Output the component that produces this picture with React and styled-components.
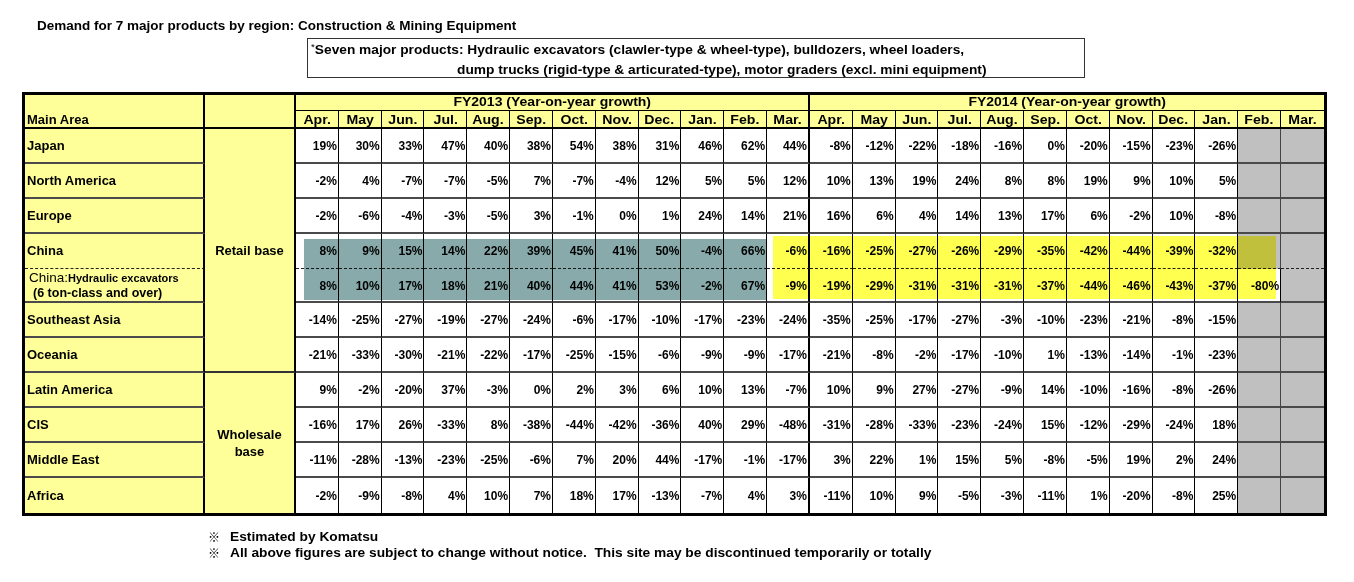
import React from 'react';
import styled, { createGlobalStyle } from 'styled-components';

const GlobalStyle = createGlobalStyle`
  body {
    margin: 0;
    background: #fff;
    font-family: "Liberation Sans", Arial, sans-serif;
    color: #000;
  }
`;

const YELLOW = '#ffff99';
const GRAY = '#c0c0c0';
const ROW_LINE = '2px solid #4a4a4a';

const Page = styled.div`
  padding-top: 19px;
  width: 1354px;
  height: 582px;
  box-sizing: border-box;
`;

const Wide = styled.span`
  display: inline-block;
  transform: scaleX(${p => p.$sx});
  transform-origin: ${p => p.$origin || 'left'} center;
`;

const Title = styled.div`
  margin-left: 37px;
  font-size: 12.5px;
  line-height: 15px;
  font-weight: bold;
  white-space: nowrap;
`;

const NoteBox = styled.div`
  margin: 4px 0 0 307px;
  width: 778px;
  height: 40px;
  box-sizing: border-box;
  border: 1px solid #333;
  padding: 0 0 0 3px;
  font-size: 12.5px;
  font-weight: bold;
  line-height: 20px;
`;

const NoteLine = styled.div`
  margin-top: ${p => p.$lift || 0}px;
  padding-left: ${p => p.$indent || 0}px;
  white-space: nowrap;
`;

const Star = styled.span`
  font-size: 9px;
  font-weight: normal;
  vertical-align: 4px;
`;

const Sheet = styled.div`
  position: relative;
  display: grid;
  width: max-content;
  margin: 14px 0 0 22px;
  border: 3px solid #000;
  grid-template-columns: 180px 91px repeat(24, 42.83px);
  grid-template-rows: 16px 18px repeat(11, 34.9px);
`;

const BaseCell = styled.div`
  box-sizing: border-box;
  display: flex;
  align-items: center;
  white-space: nowrap;
  font-weight: bold;
  border-right: ${p => p.$br || 'none'};
  border-bottom: ${p => p.$bb || 'none'};
`;

const AreaHead = styled(BaseCell)`
  grid-row: 1 / 3;
  grid-column: ${p => p.$col};
  align-items: flex-end;
  padding: 0 0 0 2px;
  background: ${YELLOW};
  font-size: 13px;
  border-right: 2px solid #000;
  border-bottom: 2px solid #000;
`;

const FyHead = styled(BaseCell)`
  grid-row: 1;
  grid-column: ${p => p.$col};
  justify-content: center;
  background: ${YELLOW};
  font-size: 12.5px;
  line-height: 15px;
  border-bottom: 1px solid #000;
`;

const MonthHead = styled(BaseCell)`
  justify-content: center;
  background: ${YELLOW};
  font-size: 12.5px;
  padding-top: 1px;
  border-bottom: 2px solid #000;
`;

const AreaCell = styled(BaseCell)`
  grid-column: 1;
  padding-left: 2px;
  background: ${YELLOW};
  font-size: 13px;
  border-right: 2px solid #000;
`;

const SubLabel = styled.div`
  display: flex;
  flex-direction: column;
  padding-left: 2px;
  line-height: 15px;
  font-size: 12.5px;
`;

const SubMain = styled.span`
  font-size: 13.5px;
  font-weight: normal;
`;

const SubSmall = styled.span`
  font-size: 11px;
  font-weight: bold;
`;

const SubSecond = styled.span`
  padding-left: 4px;
`;

const GroupCell = styled(BaseCell)`
  grid-column: 2;
  grid-row: ${p => p.$rows};
  flex-direction: column;
  justify-content: center;
  background: ${YELLOW};
  font-size: 13px;
  line-height: 17px;
  text-align: center;
  border-right: 2px solid #000;
`;

const NumCell = styled(BaseCell)`
  justify-content: flex-end;
  padding: 1px 1px 0 0;
  background: ${p => (p.$empty ? GRAY : '#fff')};
  font-size: 12px;
`;

const Highlight = styled.div`
  position: absolute;
  pointer-events: none;
  mix-blend-mode: multiply;
  background: ${p => p.$color};
`;

const Footer = styled.div`
  margin: 13px 0 0 208px;
  font-size: 12.5px;
  font-weight: bold;
  line-height: 16px;
`;

const FootLine = styled.div`
  display: flex;
  align-items: center;
  gap: 10px;
  height: 16px;
  white-space: nowrap;
`;

const Mark = styled.span`
  font-family: "Noto Sans CJK JP", "Liberation Sans", sans-serif;
  font-weight: bold;
  font-size: 12px;
  line-height: 16px;
`;

const MONTHS = ['Apr.', 'May', 'Jun.', 'Jul.', 'Aug.', 'Sep.', 'Oct.', 'Nov.', 'Dec.', 'Jan.', 'Feb.', 'Mar.'];

const rows = [
  { label: 'Japan', v: [19, 30, 33, 47, 40, 38, 54, 38, 31, 46, 62, 44, -8, -12, -22, -18, -16, 0, -20, -15, -23, -26, null, null] },
  { label: 'North America', v: [-2, 4, -7, -7, -5, 7, -7, -4, 12, 5, 5, 12, 10, 13, 19, 24, 8, 8, 19, 9, 10, 5, null, null] },
  { label: 'Europe', v: [-2, -6, -4, -3, -5, 3, -1, 0, 1, 24, 14, 21, 16, 6, 4, 14, 13, 17, 6, -2, 10, -8, null, null] },
  { label: 'China', dashed: true, v: [8, 9, 15, 14, 22, 39, 45, 41, 50, -4, 66, -6, -16, -25, -27, -26, -29, -35, -42, -44, -39, -32, null, null] },
  { label: 'hydraulic', v: [8, 10, 17, 18, 21, 40, 44, 41, 53, -2, 67, -9, -19, -29, -31, -31, -31, -37, -44, -46, -43, -37, -80, null] },
  { label: 'Southeast Asia', v: [-14, -25, -27, -19, -27, -24, -6, -17, -10, -17, -23, -24, -35, -25, -17, -27, -3, -10, -23, -21, -8, -15, null, null] },
  { label: 'Oceania', v: [-21, -33, -30, -21, -22, -17, -25, -15, -6, -9, -9, -17, -21, -8, -2, -17, -10, 1, -13, -14, -1, -23, null, null] },
  { label: 'Latin America', v: [9, -2, -20, 37, -3, 0, 2, 3, 6, 10, 13, -7, 10, 9, 27, -27, -9, 14, -10, -16, -8, -26, null, null] },
  { label: 'CIS', v: [-16, 17, 26, -33, 8, -38, -44, -42, -36, 40, 29, -48, -31, -28, -33, -23, -24, 15, -12, -29, -24, 18, null, null] },
  { label: 'Middle East', v: [-11, -28, -13, -23, -25, -6, 7, 20, 44, -17, -1, -17, 3, 22, 1, 15, 5, -8, -5, 19, 2, 24, null, null] },
  { label: 'Africa', v: [-2, -9, -8, 4, 10, 7, 18, 17, -13, -7, 4, 3, -11, 10, 9, -5, -3, -11, 1, -20, -8, 25, null, null] },
];

const colBorder = (i, empty) => {
  if (i === 23) return 'none';
  if (i === 11) return '2px solid #000';
  if (empty) return '1px solid #444';
  return '1px solid #000';
};

const rowBorder = (r) => {
  if (r === rows.length - 1) return 'none';
  if (rows[r].dashed) return '1px dashed #222';
  return ROW_LINE;
};

const COL_W = 42.83;
const DATA_X = 271;
const rowTop = (r) => 34 + r * 34.9;

const App = () => {
  const china = 3;
  return (
    <Page>
      <GlobalStyle />
      <Title>
        <Wide $sx={1.08}>Demand for 7 major products by region: Construction &amp; Mining Equipment</Wide>
      </Title>
      <NoteBox>
        <NoteLine $lift={-2}>
          <Wide $sx={1.097}>
            <Star>*</Star>Seven major products: Hydraulic excavators (clawler-type &amp; wheel-type), bulldozers, wheel loaders,
          </Wide>
        </NoteLine>
        <NoteLine $indent={146}>
          <Wide $sx={1.1}>dump trucks (rigid-type &amp; articurated-type), motor graders (excl. mini equipment)</Wide>
        </NoteLine>
      </NoteBox>

      <Sheet>
        <AreaHead $col={1}>Main Area</AreaHead>
        <AreaHead $col={2} />
        <FyHead $col="3 / 15" $br="2px solid #000">
          <Wide $sx={1.12} $origin="center">FY2013 (Year-on-year growth)</Wide>
        </FyHead>
        <FyHead $col="15 / 27">
          <Wide $sx={1.12} $origin="center">FY2014 (Year-on-year growth)</Wide>
        </FyHead>
        <GroupCell $rows="3 / 10" $bb="2px solid #333">Retail base</GroupCell>
        <GroupCell $rows="10 / 14">
          <span>Wholesale</span>
          <span>base</span>
        </GroupCell>

        {[...MONTHS, ...MONTHS].map((m, i) => (
          <MonthHead key={'m' + i} $br={colBorder(i)}>
            <Wide $sx={1.13} $origin="center">{m}</Wide>
          </MonthHead>
        ))}

        {rows.map((row, r) => (
          <React.Fragment key={row.label}>
            <AreaCell $bb={rowBorder(r)}>
              {row.label === 'hydraulic' ? (
                <SubLabel>
                  <span>
                    <SubMain>China:</SubMain>
                    <SubSmall>Hydraulic excavators</SubSmall>
                  </span>
                  <SubSecond>(6 ton-class and over)</SubSecond>
                </SubLabel>
              ) : (
                row.label
              )}
            </AreaCell>
            {row.v.map((val, i) => (
              <NumCell
                key={i}
                $empty={val === null}
                $br={colBorder(i, val === null)}
                $bb={rowBorder(r)}
              >
                {val === null ? '' : `${val}%`}
              </NumCell>
            ))}
          </React.Fragment>
        ))}

        <Highlight
          $color="#88aaaa"
          style={{
            left: DATA_X + 8,
            top: rowTop(china) + 5,
            width: COL_W * 11 - 9,
            height: 61,
          }}
        />
        <Highlight
          $color="#ffff50"
          style={{
            left: DATA_X + COL_W * 11 + 6,
            top: rowTop(china) + 2,
            width: COL_W * 12 - 11,
            height: 63,
          }}
        />
      </Sheet>

      <Footer>
        <FootLine>
          <Mark>※</Mark>
          <Wide $sx={1.1}>Estimated by Komatsu</Wide>
        </FootLine>
        <FootLine>
          <Mark>※</Mark>
          <Wide $sx={1.1}>All above figures are subject to change without notice.&nbsp; This site may be discontinued temporarily or totally</Wide>
        </FootLine>
      </Footer>
    </Page>
  );
};

export default App;
